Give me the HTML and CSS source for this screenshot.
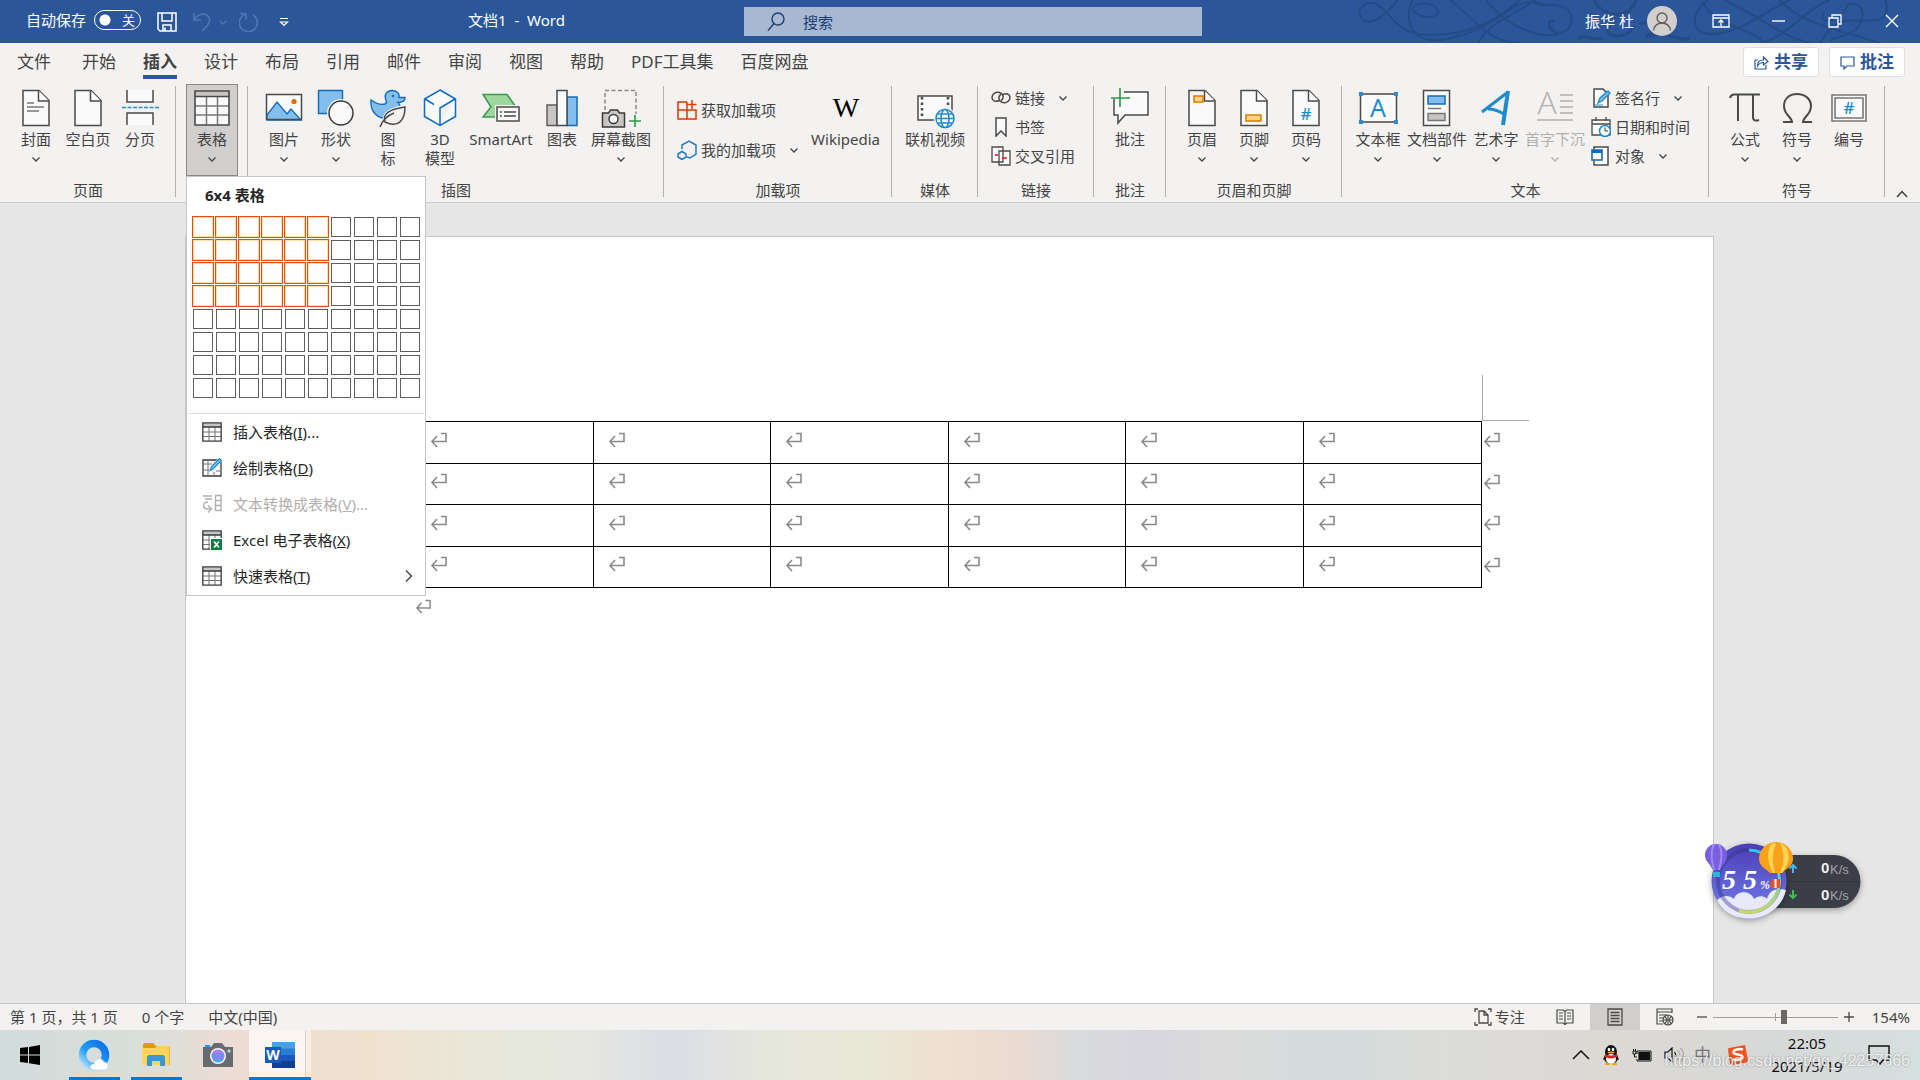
FILE: index.html
```html
<!DOCTYPE html>
<html lang="zh-CN">
<head>
    <meta charset="UTF-8">
    <meta name="viewport" content="width=device-width, initial-scale=1.0">
    <title>文档1 - Word</title>
    <link rel="stylesheet" href="styles.css">
</head>
<body>

<!-- Shared icons -->
<svg width="0" height="0" class="sprite" aria-hidden="true">
    <symbol id="chevron" viewBox="0 0 12 12"><path d="M2.500 4.500L6 8l3.500-3.500" fill="none" stroke="currentColor" stroke-width="1.300"/></symbol>
    <symbol id="enter" viewBox="0 0 18 16"><path d="M11 1.500h5v8H2M7 4L2 9.500 7 15" fill="none" stroke="#8a8a8a" stroke-width="1.600"/></symbol>
    <symbol id="table-sm" viewBox="0 0 20 20"><path d="M.8.8h18.4v18.4H.8z" fill="#fafafa"/><path d="M1 1h18v4H1z" fill="#c8c6c4"/><path d="M1 10h18M1 14.500h18M7 5v14M13 5v14" stroke="#797775"/><path d="M.8.8h18.4v18.4H.8zM1 5h18" fill="none" stroke="#3b3a39" stroke-width="1.300"/></symbol>
    <symbol id="sheet" viewBox="0 0 40 40"><path d="M7 2.500h16l10 10V37.500H7z" fill="#fafafa" stroke="#4b4a48" stroke-width="1.500"/><path d="M22.500 2.500v10.500H33" fill="#fff" stroke="#4b4a48" stroke-width="1.500"/></symbol>
</svg>

<header class="titlebar">
    <svg class="swirls" viewBox="0 0 580 43" aria-hidden="true">
        <g fill="none" stroke="#254b86" stroke-width="2">
            <path d="M58 0C40 22 28 25 22 19C14 10 26 0 36 4C50 10 54 30 78 34C120 38 150 26 180 0"/>
            <path d="M72 0C64 24 72 42 100 40C130 36 150 24 170 10C186 -2 200 2 210 6"/>
            <path d="M72 8C82 0 98 4 98 12C96 20 76 18 72 8M110 0C140 24 150 43 180 43"/>
            <path d="M138 43C150 22 174 14 196 0M146 0C170 30 200 38 218 34C236 30 236 10 220 6C206 2 200 10 192 0"/>
            <path d="M218 34C206 28 208 18 214 22M238 40C244 32 252 42 262 38M254 0C262 18 290 20 296 0M270 26C260 34 284 44 294 26M300 24C310 20 320 30 306 36C330 30 340 43 350 38" stroke-width="3"/>
            <path d="M368 0C350 14 350 32 370 34C400 34 420 14 450 0M384 0C420 16 440 36 470 43M362 2C380 30 410 26 424 43"/>
            <path d="M420 43C450 36 460 12 490 0M440 0C460 24 500 30 540 43M484 12C476 26 500 22 506 8C510 -2 530 6 520 24C516 34 500 36 490 40M545 0C550 10 544 22 534 20C510 24 500 10 480 43"/>
        </g>
    </svg>
    <div class="titlebar-left">
        <label class="autosave">自动保存
            <span class="switch"><input type="checkbox"><span>关</span></span>
        </label>
        <button class="plain" aria-label="保存"><svg width="20" height="20" viewBox="0 0 20 20" fill="none" stroke="#fff" stroke-width="1.500"><path d="M1 1h18v18H3l-2-2zM5 1v8h10V1M6 19v-6h8v6M8 15.500v3"/></svg></button>
        <div class="undo">
            <button class="plain" aria-label="撤消"><svg width="18" height="20" viewBox="0 0 18 20" fill="none" stroke="#4f76b3" stroke-width="1.600"><path d="M1 1v7h7M1 8C6 1 12 1 15 4c3 4 1 8-1 10l-5 5"/></svg></button>
            <svg width="12" height="12"><use href="#chevron"/></svg>
            <button class="plain" aria-label="重复"><svg width="20" height="20" viewBox="0 0 20 20" fill="none" stroke="#4f76b3" stroke-width="1.600"><path d="M1 1.500h6v6M7 2A9 9 0 1 0 14 3"/></svg></button>
        </div>
        <button class="plain" aria-label="自定义快速访问工具栏"><svg width="10" height="10" viewBox="0 0 10 10" fill="none" stroke="#fff" stroke-width="1.200"><path d="M1 1.500h8M1.500 5L5 8.500 8.500 5z"/></svg></button>
        <h1 class="doc-title">文档1&nbsp; -&nbsp; Word</h1>
    </div>
    <label class="search">
        <svg width="18" height="20" viewBox="0 0 18 20" fill="none" stroke="#1f3f75" stroke-width="1.400"><circle cx="11" cy="7" r="6"/><path d="M7 11.500L1 18.500"/></svg>
        <input type="search" placeholder="搜索" aria-label="搜索">
    </label>
    <div class="titlebar-right">
        <span>振华 杜</span>
        <svg class="avatar" width="30" height="30" viewBox="0 0 30 30"><circle cx="15" cy="15" r="15" fill="#d2d0ce"/><g fill="none" stroke="#605e5c" stroke-width="1.400"><circle cx="15" cy="12" r="5"/><path d="M6.500 24.500c1-10 16-10 17 0"/></g></svg>
        <button class="window-btn" aria-label="功能区显示选项"><svg width="18" height="14" viewBox="0 0 18 14" fill="none" stroke="#fff" stroke-width="1.300"><path d="M1 1h16v12H1zM1 4h16M9 12V6M6.500 8.500L9 6l2.500 2.500"/></svg></button>
        <button class="window-btn" aria-label="最小化"><svg width="14" height="14"><path d="M1 7h13" stroke="#fff" stroke-width="1.400"/></svg></button>
        <button class="window-btn" aria-label="向下还原"><svg width="14" height="14" viewBox="0 0 14 14" fill="none" stroke="#fff" stroke-width="1.300"><path d="M1 4h9v9H1zM4 4V1h9v9h-3"/></svg></button>
        <button class="window-btn" aria-label="关闭"><svg width="14" height="14"><path d="M1 1l12 12M13 1L1 13" stroke="#fff" stroke-width="1.400"/></svg></button>
    </div>
</header>

<nav class="tabs">
    <button class="tab tab-file">文件</button>
    <button class="tab">开始</button>
    <button class="tab active">插入</button>
    <button class="tab">设计</button>
    <button class="tab">布局</button>
    <button class="tab">引用</button>
    <button class="tab">邮件</button>
    <button class="tab">审阅</button>
    <button class="tab">视图</button>
    <button class="tab">帮助</button>
    <button class="tab">PDF工具集</button>
    <button class="tab">百度网盘</button>
    <div class="tab-actions">
        <button class="action"><svg width="15" height="15" viewBox="0 0 15 15" fill="none" stroke="#2b579a" stroke-width="1.200"><path d="M4 5H1v9h11v-4M3.500 11c0-4 2-6 6-6V2l4.500 4.500L9.500 10V7.500c-3 0-4.500 1-6 3.500z"/></svg>共享</button>
        <button class="action"><svg width="15" height="15" viewBox="0 0 15 15" fill="none" stroke="#2b579a" stroke-width="1.200"><path d="M1 2h13v9H7l-3 3v-3H1z"/></svg>批注</button>
    </div>
</nav>

<section class="ribbon">
    <div class="group">
        <div class="group-items">
            <button class="big">
                <svg class="icon"><use href="#sheet"/><path d="M11 15h7M11 19h17M11 23h12" stroke="#797775" stroke-width="1.500"/></svg>
                <span>封面</span><svg class="chev"><use href="#chevron"/></svg>
            </button>
            <button class="big"><svg class="icon"><use href="#sheet"/></svg><span>空白页</span></button>
            <button class="big">
                <svg class="icon" fill="#fafafa" stroke="#4b4a48" stroke-width="1.500"><path d="M7 2v12h26V2M7 37V25h26v12"/><path d="M2 19.500h37" stroke="#2a8dd4" stroke-dasharray="4 1.500"/></svg>
                <span>分页</span>
            </button>
        </div>
        <div class="group-label">页面</div>
    </div>

    <div class="group">
        <div class="group-items">
            <div class="dropdown">
                <button class="big pressed">
                    <svg class="icon"><path d="M3 3h34v34H3z" fill="#fafafa"/><path d="M3 3h34v6H3z" fill="#c8c6c4"/><path d="M3 18h34M3 27h34M14.500 9v28M25.500 9v28" stroke="#797775" stroke-width="1.500"/><path d="M3 3h34v34H3zM3 8.500h34" fill="none" stroke="#4b4a48" stroke-width="1.600"/></svg>
                    <span>表格</span><svg class="chev"><use href="#chevron"/></svg>
                </button>
                <div class="menu">
                    <div class="menu-title" id="gridTitle">6x4 表格</div>
                    <div class="size-grid" id="sizeGrid"></div>
                    <ul class="menu-list">
                        <li><button><svg width="20" height="20"><use href="#table-sm"/></svg><span>插入表格(<u>I</u>)...</span></button></li>
                        <li><button><svg width="20" height="20" viewBox="0 0 20 20"><path d="M1 2h18v16H1z" fill="#fafafa" stroke="#3b3a39" stroke-width="1.300"/><path d="M1 6h9M1 12h6M6 2v16M12 14v4M14 13h5" stroke="#797775"/><path d="M7 13l2-5 9-9 3 3-9 9z" fill="#fff"/><path d="M8 12.500l1.500-4 8-8 2 2-8 8z" fill="#83beec" stroke="#1e8bcd" stroke-width="1.200"/></svg><span>绘制表格(<u>D</u>)</span></button></li>
                        <li><button disabled><svg width="20" height="20" viewBox="0 0 20 20" fill="none" stroke="#b1afad" stroke-width="1.400"><path d="M1 2h9M3 5h7M13.500 1.500h5.500v15h-5.500zM13.500 6.500H19M13.500 11.500H19M6 8c-6 0-6 7 0 7h3M6 11.500l3.500 3.500L6 18.500"/></svg><span>文本转换成表格(<u>V</u>)...</span></button></li>
                        <li><button><svg width="20" height="20"><use href="#table-sm"/><path d="M8 8h12v12H8z" fill="#fff"/><path d="M9 9h11v11H9z" fill="#107c41"/><path d="M12 11.500l5 6M17 11.500l-5 6" stroke="#fff" stroke-width="1.600"/></svg><span>Excel 电子表格(<u>X</u>)</span></button></li>
                        <li><button><svg width="20" height="20"><use href="#table-sm"/></svg><span>快速表格(<u>T</u>)</span><svg class="submenu" width="8" height="12" fill="none" stroke="#3b3a39" stroke-width="1.300"><path d="M1 0.500l5.500 5.500L1 11.500"/></svg></button></li>
                    </ul>
                </div>
            </div>
        </div>
    </div>

    <div class="group">
        <div class="group-items">
            <button class="big">
                <svg class="icon"><path d="M2.500 6.500h35v25h-35z" fill="#fafafa"/><path d="M3 27l10-13 10 12 4-5 10 11H3z" fill="#83beec" stroke="#0f6cbd" stroke-width="1.300"/><circle cx="30" cy="13.500" r="2.600" fill="#e06c00"/><path d="M2.500 6.500h35v25h-35z" fill="none" stroke="#4b4a48" stroke-width="1.500"/></svg>
                <span>图片</span><svg class="chev"><use href="#chevron"/></svg>
            </button>
            <button class="big">
                <svg class="icon"><path d="M2.500 2.500h24v23h-24z" fill="#83beec" stroke="#0f6cbd" stroke-width="1.400"/><circle cx="25" cy="25" r="14" fill="#f3f2f1"/><circle cx="25" cy="25" r="12" fill="#fafafa" stroke="#3b3a39" stroke-width="1.500"/></svg>
                <span>形状</span><svg class="chev"><use href="#chevron"/></svg>
            </button>
            <button class="big">
                <svg class="icon"><path d="M3 12c6 4 9 5 14 4 2-1 2-2 1-4-3-7 3-10 7-9.500 5 .5 7 4 6 7h6c0 4-3 5-7 5 5 4 1 16-11 16-9 0-17-6-16-18.500z" fill="#83beec" stroke="#0f6cbd" stroke-width="1.400"/><circle cx="25" cy="8" r="1.200" fill="#0f6cbd"/><path d="M10 40c2-6 3-8 5-10 1-8 11-12 24-13 0 12-4 22-20 21z" fill="#f3f2f1"/><path d="M12 39c3-8 9-12 14-14M17 34c-3-9 6-13 20-15 0 12-6 22-20 15z" fill="none" stroke="#4b4a48" stroke-width="1.500"/></svg>
                <span>图<br>标</span>
            </button>
            <button class="big">
                <svg class="icon" fill="#fafafa" stroke="#0f6cbd" stroke-width="1.500"><path d="M20 2l15.500 9v17.500L20 37.500 4.500 28.500V11zM5 11l9 5.500M35 11L20 20v17"/></svg>
                <span>3D<br>模型</span>
            </button>
            <button class="big wide">
                <svg class="icon"><path d="M2 6.500h24L35 19l-9 10H2l8-10z" fill="#9fd89f" stroke="#3a9a4c" stroke-width="1.500"/><path d="M14 17h25v18H14z" fill="#f3f2f1"/><path d="M16 19h22v14H16z" fill="#fafafa" stroke="#4b4a48" stroke-width="1.500"/><path d="M19 24h2M23 24h12M19 28h2M23 28h12" stroke="#4b4a48" stroke-width="1.300"/></svg>
                <span>SmartArt</span>
            </button>
            <button class="big">
                <svg class="icon" stroke-width="1.500"><path d="M5 17h10v20.500H5z" fill="#c8c6c4" stroke="#605e5c"/><path d="M25 9h10v28.500H25z" fill="#83beec" stroke="#0f6cbd"/><path d="M15 2.500h10v35H15z" fill="#fafafa" stroke="#4b4a48"/></svg>
                <span>图表</span>
            </button>
            <button class="big mid">
                <svg class="icon" fill="none"><path d="M4 22V2.500h31V26" stroke="#8a8886" stroke-width="1.500" stroke-dasharray="4 2.500"/><path d="M1.500 25h6l2-3h7l2 3h5v14h-22z" fill="#c8c6c4" stroke="#3b3a39" stroke-width="1.500"/><circle cx="12.500" cy="31" r="4.500" fill="#fafafa" stroke="#3b3a39" stroke-width="1.500"/><path d="M28 33h12M34 27v12" stroke="#2b9a46" stroke-width="1.600"/></svg>
                <span>屏幕截图</span><svg class="chev"><use href="#chevron"/></svg>
            </button>
        </div>
        <div class="group-label">插图</div>
    </div>

    <div class="group">
        <div class="group-items">
            <div class="stack loose">
                <button class="small"><svg width="20" height="20" viewBox="0 0 20 20" fill="none" stroke="#d83b01" stroke-width="1.500"><path d="M10 2H1v17h18v-9H1M10 2v17M15 0v9M10.500 4.500h9"/></svg>获取加载项</button>
                <button class="small"><svg width="20" height="20" viewBox="0 0 20 20" fill="none" stroke="#2179c4" stroke-width="1.500"><path d="M5 9V5l7-4 7 4v9l-6 4-3-1M1 14l4-2.500L9 14v3l-4 2.500L1 17z"/></svg>我的加载项<svg class="chev"><use href="#chevron"/></svg></button>
            </div>
            <button class="big wiki"><svg class="icon"><text x="20" y="29" text-anchor="middle" class="wiki-w">W</text></svg><span>Wikipedia</span></button>
        </div>
        <div class="group-label">加载项</div>
    </div>

    <div class="group">
        <div class="group-items">
            <button class="big mid">
                <svg class="icon"><path d="M3 8h34v24H3z" fill="#fafafa" stroke="#4b4a48" stroke-width="1.500"/><path d="M7 9v22M33 9v22" stroke="#4b4a48" stroke-width="2.500" stroke-dasharray="2.500 3"/><circle cx="30" cy="30.500" r="11" fill="#f3f2f1"/><g fill="#fafafa" stroke="#1e8bcd" stroke-width="1.500"><circle cx="30" cy="30.500" r="9"/><ellipse cx="30" cy="30.500" rx="4" ry="9"/><path d="M21 30.500h18M22.500 26h15M22.500 35h15"/></g></svg>
                <span>联机视频</span>
            </button>
        </div>
        <div class="group-label">媒体</div>
    </div>

    <div class="group">
        <div class="group-items">
            <div class="stack">
                <button class="small"><svg width="20" height="20" viewBox="0 0 20 20" fill="none" stroke="#4b4a48" stroke-width="1.500"><path d="M8 12.500C3 15 0 11 1.500 7.500S8 3 11 6c2 2.500 1 5.500-1 6.500M12 6.500c5-2.500 8 1.500 6.500 5S12 16 9 13c-2-2.500-1-5.500 1-6.500"/></svg>链接<svg class="chev"><use href="#chevron"/></svg></button>
                <button class="small"><svg width="20" height="20" viewBox="0 0 20 20" fill="#fafafa" stroke="#4b4a48" stroke-width="1.500"><path d="M5 1h10v18l-5-5-5 5z"/></svg>书签</button>
                <button class="small"><svg width="20" height="20" viewBox="0 0 20 20" fill="#fafafa" stroke="#4b4a48" stroke-width="1.300"><path d="M1 1h11v15H1zM8 5h11v14H8z"/><path d="M4 9h3M11 12h5" stroke="#e81123" stroke-width="1.500"/></svg>交叉引用</button>
            </div>
        </div>
        <div class="group-label">链接</div>
    </div>

    <div class="group">
        <div class="group-items">
            <button class="big">
                <svg class="icon" fill="#fafafa"><path d="M4 4h34v23H15l-7 8v-8H4z" stroke="#4b4a48" stroke-width="1.500"/><path d="M0 0h14v6h-3v8H7v-3H0z" fill="#f3f2f1"/><path d="M1 10h19M10 0v19" stroke="#2b9a46" stroke-width="1.600"/></svg>
                <span>批注</span>
            </button>
        </div>
        <div class="group-label">批注</div>
    </div>

    <div class="group">
        <div class="group-items">
            <button class="big"><svg class="icon"><use href="#sheet"/><path d="M12 8h9v6h-9z" fill="#fcd38a" stroke="#e07b00" stroke-width="1.500"/></svg><span>页眉</span><svg class="chev"><use href="#chevron"/></svg></button>
            <button class="big"><svg class="icon"><use href="#sheet"/><path d="M12 27h15v6H12z" fill="#fcd38a" stroke="#e07b00" stroke-width="1.500"/></svg><span>页脚</span><svg class="chev"><use href="#chevron"/></svg></button>
            <button class="big"><svg class="icon"><use href="#sheet"/><text x="20" y="32" text-anchor="middle" class="glyph hash">#</text></svg><span>页码</span><svg class="chev"><use href="#chevron"/></svg></button>
        </div>
        <div class="group-label">页眉和页脚</div>
    </div>

    <div class="group">
        <div class="group-items">
            <button class="big">
                <svg class="icon"><path d="M2.500 6h36v28h-36z" fill="#fafafa" stroke="#4b4a48" stroke-width="1.500"/><text x="20" y="29" text-anchor="middle" class="glyph letter">A</text><path d="M1 4h4v4H1zM36 4h4v4h-4zM1 32h4v4H1zM36 32h4v4h-4z" fill="#2a8dd4"/></svg>
                <span>文本框</span><svg class="chev"><use href="#chevron"/></svg>
            </button>
            <button class="big mid">
                <svg class="icon" stroke-width="1.500"><path d="M6.500 2.500h26v35h-26z" fill="#fafafa" stroke="#4b4a48"/><path d="M11 8h17v8H11z" fill="#83beec" stroke="#0f6cbd"/><path d="M11 20.500h13" stroke="#797775"/><path d="M11 25.500h17v7H11z" fill="#c8c6c4" stroke="#797775"/></svg>
                <span>文档部件</span><svg class="chev"><use href="#chevron"/></svg>
            </button>
            <button class="big">
                <svg class="icon" fill="none" stroke="#1e8bcd"><path d="M6 24L32 4M12 21c6 0 11 2 16 5" stroke-width="3"/><path d="M32 3L27 37" stroke-width="4"/></svg>
                <span>艺术字</span><svg class="chev"><use href="#chevron"/></svg>
            </button>
            <button class="big mid" disabled>
                <svg class="icon"><text x="12" y="26" text-anchor="middle" class="drop-cap">A</text><path d="M25 7h13M25 13h13M25 19h13M25 25h13M2 32h36" stroke="#b1afad" stroke-width="1.500"/></svg>
                <span>首字下沉</span><svg class="chev"><use href="#chevron"/></svg>
            </button>
            <div class="stack">
                <button class="small"><svg width="20" height="20" viewBox="0 0 20 20"><path d="M3 1h9l5 5v13H3z" fill="#fafafa" stroke="#4b4a48" stroke-width="1.500"/><path d="M3 17h9" stroke="#1e8bcd"/><path d="M7 15l2-5 8-7 2 2-8 8z" fill="#83beec" stroke="#1e8bcd" stroke-width="1.300"/></svg>签名行<svg class="chev"><use href="#chevron"/></svg></button>
                <button class="small"><svg width="20" height="20" viewBox="0 0 20 20" fill="#fafafa"><path d="M1 3h18v15H1zM1 7h18M5 0v4M15 0v4" stroke="#4b4a48" stroke-width="1.300"/><circle cx="14" cy="14" r="5.500" stroke="#1e8bcd" stroke-width="1.500"/><path d="M14 10.500V14h3" fill="none" stroke="#3b3a39"/></svg>日期和时间</button>
                <button class="small"><svg width="20" height="20" viewBox="0 0 20 20" fill="#fafafa"><path d="M3 1h14v18H3z" stroke="#4b4a48" stroke-width="1.500"/><path d="M1 4h10v10H1z" stroke="#0f6cbd" stroke-width="1.600"/><path d="M1 5.500h10" stroke="#0f6cbd" stroke-width="3"/></svg>对象<svg class="chev"><use href="#chevron"/></svg></button>
            </div>
        </div>
        <div class="group-label">文本</div>
    </div>

    <div class="group">
        <div class="group-items">
            <button class="big"><svg class="icon" fill="none" stroke="#4b4a48" stroke-width="2"><path d="M5 10c1-3 2-3.500 4-3.500h26M13 7v26M28 7v22c0 4 3 4 6 3"/></svg><span>公式</span><svg class="chev"><use href="#chevron"/></svg></button>
            <button class="big"><svg class="icon" fill="none" stroke="#4b4a48" stroke-width="2"><path d="M6 34h9c0-5-8-7-8-16C7 11 12 6 20 6s14 5 14 12c0 9-8 11-8 16h9"/></svg><span>符号</span><svg class="chev"><use href="#chevron"/></svg></button>
            <button class="big"><svg class="icon" fill="#fafafa" stroke="#797775" stroke-width="1.600"><path d="M3 7h34v26H3zM6 10h28v20H6z"/><text x="20" y="26" text-anchor="middle" class="glyph hash">#</text></svg><span>编号</span></button>
        </div>
        <div class="group-label">符号</div>
    </div>
    <button class="plain collapse" aria-label="折叠功能区"><svg width="12" height="8" fill="none" stroke="#3b3a39" stroke-width="1.500"><path d="M1 7l5-5.500L11 7"/></svg></button>
</section>

<main class="workspace">
    <div class="page">
        <div class="top-margin"><span class="crop-mark"></span></div>
        <table class="doc-table" id="docTable"></table>
        <p class="paragraph"><svg width="17" height="15"><use href="#enter"/></svg></p>
    </div>
</main>

<!-- Floating speed monitor -->
<aside class="monitor">
    <svg width="170" height="100" viewBox="0 0 170 100">
        <defs>
            <linearGradient id="ball" x1="0" y1="0" x2="0" y2="1"><stop offset="0" stop-color="#4a3db4"/><stop offset="1" stop-color="#7480ee"/></linearGradient>
            <linearGradient id="ring" x1="0" y1="0" x2="0" y2="1"><stop offset="0" stop-color="#35c3e8"/><stop offset="1" stop-color="#c6dd5a"/></linearGradient>
            <filter id="shade" x="-20%" y="-20%" width="140%" height="150%"><feDropShadow dx="0" dy="2" stdDeviation="3" flood-opacity=".35"/></filter>
        </defs>
        <path d="M54 15h80a26 26 0 0 1 0 53H54z" fill="#3a3e47" filter="url(#shade)"/>
        <path d="M70 41.500h89" stroke="#30343b"/>
        <circle cx="49" cy="41" r="37.500" fill="url(#ball)" filter="url(#shade)"/>
        <path d="M17 60c6-5 12-5 17-1 2-9 17-9 20 0 6-4 10-3 13 0 2-9 10-12 19-9C82 68 66 78.500 49 78.500S22 70 17 60z" fill="#e8eafc"/>
        <circle cx="49" cy="41" r="31" fill="none" stroke="#352f85" stroke-opacity=".4" stroke-width="4"/>
        <path d="M49 10a31 31 0 1 1-10 60.500" fill="none" stroke="url(#ring)" stroke-width="3"/>
        <g fill="#7a5fe0"><circle cx="16" cy="15" r="11"/><path d="M6 19l7 11h7l7-11z"/></g>
        <path d="M14 4c-4 8-3 16 0 26M19 4c4 8 3 16 0 26" fill="none" stroke="#a08af0" stroke-width="2"/>
        <path d="M13 32h7v5h-7z" fill="#2fb5dd"/>
        <path d="M59 19a17 17 0 0 1 34 0c0 7-7 10-11 14H70c-4-4-11-7-11-14z" fill="#f9a11b"/>
        <path d="M71 4c-5 10-3 20 2 29h2c-3-11-3-20 1-30zM80 3c5 10 4 20 0 30h2c6-8 10-18 3-27z" fill="#ffd454"/>
        <path d="M71 39h9v9h-9z" fill="#e65320"/><path d="M75.500 39v9" stroke="#fff" stroke-width="2"/>
        <path d="M93 33v-7M89.500 28.500L93 25l3.500 3.500" fill="none" stroke="#43b6ee" stroke-width="2"/>
        <path d="M93 50v7M89.500 54.500L93 58l3.500-3.500" fill="none" stroke="#38c04b" stroke-width="2"/>
        <text x="22" y="49" class="percent">5 5</text>
        <text x="60" y="49" class="percent-sign">%</text>
        <text x="121" y="33" class="speed">0</text><text x="130" y="34" class="unit">K/s</text>
        <text x="121" y="60" class="speed">0</text><text x="130" y="60" class="unit">K/s</text>
    </svg>
</aside>

<footer class="statusbar">
    <span>第 1 页，共 1 页</span>
    <span>0 个字</span>
    <span>中文(中国)</span>
    <div class="status-right">
        <button class="plain focus-btn"><svg width="18" height="18" viewBox="0 0 18 18" fill="none" stroke="#4b4a48" stroke-width="1.300"><path d="M4 1H1v3M14 1h3v3M4 17H1v-3M14 17h3v-3M5 3h5l4 4v8H5zM10 3v4h4"/></svg>专注</button>
        <button class="view" aria-label="阅读视图"><svg width="18" height="16" viewBox="0 0 18 16" fill="none" stroke="#4b4a48" stroke-width="1.200"><path d="M9 2.500L7 1H1v13h6l2 1.500 2-1.500h6V1h-6zM9 2.500V15M3 4h4M3 7h4M3 10h4M11 4h4M11 7h4M11 10h4"/></svg></button>
        <button class="view on" aria-label="页面视图"><svg width="16" height="18" viewBox="0 0 16 18" fill="none" stroke="#4b4a48" stroke-width="1.300"><path d="M1 1h14v16H1zM3.500 4.500h9M3.500 7.500h9M3.500 10.500h9M3.500 13.500h9"/></svg></button>
        <button class="view" aria-label="Web 版式视图"><svg width="18" height="18" viewBox="0 0 18 18" fill="none" stroke="#4b4a48" stroke-width="1.200"><path d="M16 5V1H1v15h6M1 4h15M3 7h8M3 10h5M3 13h4"/><circle cx="12" cy="12" r="5"/><path d="M7 12h10M12 7v10M9 8.500c2 2 2 5 0 7M15 8.500c-2 2-2 5 0 7"/></svg></button>
        <div class="zoom">
            <button class="plain" aria-label="缩小"><svg width="12" height="12"><path d="M1 6h10" stroke="#4b4a48" stroke-width="1.300"/></svg></button>
            <input type="range" min="0" max="100" value="57" aria-label="缩放">
            <button class="plain" aria-label="放大"><svg width="12" height="12"><path d="M1 6h10M6 1v10" stroke="#4b4a48" stroke-width="1.300"/></svg></button>
        </div>
        <span class="zoom-value">154%</span>
    </div>
</footer>

<div class="taskbar">
    <button class="task start" aria-label="开始"><svg width="20" height="20" viewBox="0 0 20 20"><path d="M0 3l8-1v7.500H0zM9 1.900L20 0v9.500H9zM0 10.500h8V18l-8-1zM9 10.500h11V20L9 18.300z"/></svg></button>
    <button class="task open" aria-label="QQ浏览器">
        <svg width="32" height="32" viewBox="0 0 32 32"><defs><linearGradient id="qb" x1="0" y1="1" x2="1" y2="0"><stop offset="0" stop-color="#bfe6ff"/><stop offset=".4" stop-color="#1fa0f8"/><stop offset="1" stop-color="#0d6fe8"/></linearGradient></defs><circle cx="16" cy="16" r="11.500" fill="none" stroke="url(#qb)" stroke-width="7.500"/><path d="M16 31c-5 0-5-6 0-6 1-6 8-7 10-2 5 0 6 8 0 8z" fill="#fff" stroke="#b9cfe4" stroke-width=".6"/></svg>
    </button>
    <button class="task open" aria-label="文件资源管理器">
        <svg width="28" height="26" viewBox="0 0 28 26"><path d="M1 3q0-2 2-2h8l3 3h12q2 0 2 2v17H1z" fill="#dd9a0a"/><path d="M0 6h13l2-2h11q1.500 0 1.500 2v17H0z" fill="#ffd35c"/><path d="M5 24v-8q0-3 3-3h12q3 0 3 3v8h-5v-5h-8v5z" fill="#3b96d8"/></svg>
    </button>
    <button class="task" aria-label="相机">
        <svg width="30" height="26" viewBox="0 0 30 26"><path d="M2 3h5v3H2z" fill="#1aa0e8"/><path d="M0 5h8l3-4h8l3 4h8v20H0z" fill="#666b70"/><circle cx="15" cy="14" r="8" fill="#f4f4f4"/><circle cx="15" cy="14" r="6.500" fill="#7a8af0"/><path d="M9.500 11a6.500 6.500 0 0 1 11 0z" fill="#b77be8"/><path d="M10 18a6.500 6.500 0 0 0 10 0z" fill="#3bb3f0"/><path d="M26 7v4M24 9h4" stroke="#dde3e8"/></svg>
    </button>
    <button class="task open current" aria-label="Word">
        <svg width="30" height="26" viewBox="0 0 30 26"><path d="M7 0h23v7H7z" fill="#41a5ee"/><path d="M7 6.500h23v7H7z" fill="#2b7cd3"/><path d="M7 13h23v7H7z" fill="#185abd"/><path d="M7 19h23v7H7z" fill="#103f91"/><path d="M0 5h16v16H0z" fill="#185abd"/><text x="8" y="18" text-anchor="middle" class="word-w">W</text></svg>
    </button>
    <div class="tray">
        <svg width="18" height="10" fill="none" stroke="#111" stroke-width="1.500"><path d="M1 9l8-8 8 8"/></svg>
        <svg width="18" height="20" viewBox="0 0 18 20"><path d="M4 10L1 14l1 1 3-2zM14 10l3 4-1 1-3-2z" fill="#111"/><ellipse cx="9" cy="7" rx="6" ry="7" fill="#111"/><ellipse cx="9" cy="13" rx="7" ry="6" fill="#111"/><ellipse cx="9" cy="14" rx="5" ry="5" fill="#fff"/><path d="M3 9q6 3 12 0l.5 2.500Q9 15 3 12z" fill="#e02020"/><ellipse cx="7" cy="4.500" rx="1.300" ry="1.800" fill="#fff"/><ellipse cx="11" cy="4.500" rx="1.300" ry="1.800" fill="#fff"/><ellipse cx="9" cy="7.500" rx="3.500" ry="1" fill="#f7a600"/><path d="M3 18h5v2H3zM10 18h5v2h-5z" fill="#f7a600"/></svg>
        <svg width="20" height="14" viewBox="0 0 20 14"><path d="M6 3.500h12.500v9H6z" fill="#111" stroke="#fff" stroke-width=".6"/><path d="M5 6V3h14v10H5v-2M1 3v3h3V3zM1.500 3V1M3.500 3V1M2.500 6v3H5" fill="none" stroke="#111"/></svg>
        <svg width="20" height="16" viewBox="0 0 20 16" fill="none" stroke="#111" stroke-width="1.200"><path d="M1 5h3l4-4v14l-4-4H1zM10.500 5c1.500 2 1.500 4 0 6"/><path d="M13.500 3c3 3 3 7 0 10M16.500 1c4 4 4 10 0 14" stroke="#aaa"/></svg>
        <span class="ime">中</span>
        <svg width="20" height="20" viewBox="0 0 20 20"><path d="M1 3l16-3 3 15q0 2-2 2.500L4 20q-2 0-2-2L0 5q0-2 1-2z" fill="#f0541e"/><path d="M15 4.500c-4-1-10 0-9.500 3 .5 2.500 9 1.500 9 4.500 0 2.500-5 3.500-9.500 2.500" fill="none" stroke="#fff" stroke-width="2.500"/></svg>
        <div class="clock"><time>22:05</time><time>2021/5/19</time></div>
        <svg class="notice" width="22" height="20" fill="none" stroke="#111" stroke-width="1.400"><path d="M1 1h20v14h-6l-3 4-4-4H1z"/></svg>
    </div>
    <span class="watermark">https://blog.csdn.net/qq_42257666</span>
</div>

<script>
const sizeGrid = document.getElementById('sizeGrid');
const gridTitle = document.getElementById('gridTitle');
const docTable = document.getElementById('docTable');
const mark = '<svg width="18" height="16"><use href="#enter"/></svg>';

// 10 x 8 size picker
for (let r = 1; r <= 8; r++) {
    for (let c = 1; c <= 10; c++) {
        const cell = document.createElement('button');
        cell.className = 'cell';
        cell.setAttribute('aria-label', `${c}x${r}`);
        cell.onmouseenter = () => preview(c, r);
        sizeGrid.appendChild(cell);
    }
}

// Highlight the picked size and draw the table in the document
function preview(cols, rows) {
    [...sizeGrid.children].forEach((cell, i) => {
        cell.classList.toggle('picked', i % 10 < cols && Math.floor(i / 10) < rows);
    });
    gridTitle.textContent = `${cols}x${rows} 表格`;
    const row = `<tr>${`<td>${mark}</td>`.repeat(cols)}<td class="row-end">${mark}</td></tr>`;
    docTable.innerHTML = row.repeat(rows);
}

preview(6, 4);
</script>

</body>
</html>
```

FILE: styles.css
```css
/* Global styling */
* {
    box-sizing: border-box;
}

body {
    margin: 0;
    height: 100vh;
    display: flex;
    flex-direction: column;
    overflow: hidden;
    position: relative;
    font-family: "Noto Sans", "Noto Sans CJK SC", sans-serif;
    font-size: 15px;
    line-height: 20px;
    color: #444444;
    background-color: #e6e6e6;
}

button, input {
    font: inherit;
    color: inherit;
}

button {
    padding: 0;
    border: none;
    background: none;
    white-space: nowrap;
}

svg {
    flex: none;
    display: block;
}

.sprite {
    position: absolute;
}

.plain {
    display: flex;
    align-items: center;
}

/* Title bar */
.titlebar {
    position: relative;
    display: flex;
    height: 43px;
    padding-left: 24px;
    color: #ffffff;
    background-color: #2b579a;
}

.titlebar > * {
    position: relative;
}

.titlebar .swirls {
    position: absolute;
    top: 0;
    right: 0;
    width: 580px;
    height: 43px;
}

.titlebar-left, .titlebar-right {
    flex: 1;
    display: flex;
    align-items: center;
}

.titlebar-left {
    gap: 16px;
    padding-left: 2px;
}

.titlebar-right {
    justify-content: flex-end;
    padding-bottom: 2px;
}

.autosave {
    display: flex;
    align-items: center;
    gap: 8px;
    padding-bottom: 4px;
}

.switch {
    position: relative;
    width: 47px;
    height: 20px;
}

.switch input {
    appearance: none;
    width: 47px;
    height: 20px;
    margin: 0;
    border: 1px solid #ffffff;
    border-radius: 10px;
    background: radial-gradient(circle at 10px 9px, #ffffff 5px, transparent 6px);
}

.switch span {
    position: absolute;
    right: 6px;
    top: 0;
    font-size: 13px;
}

.undo {
    display: flex;
    align-items: center;
    gap: 6px;
    margin-right: 4px;
    color: #4f76b3;
}

.undo .plain:last-child {
    margin-left: 4px;
}

.doc-title {
    flex: 1;
    margin: 0;
    padding: 0 16px 4px 0;
    font-size: 15px;
    font-weight: 400;
    text-align: center;
}

.search {
    flex: 0 1 458px;
    display: flex;
    align-items: center;
    gap: 18px;
    margin: 7px 0;
    padding-left: 23px;
    background-color: #a6b8d2;
}

.search input {
    flex: 1;
    min-width: 0;
    padding: 0;
    border: none;
    outline: none;
    background: none;
}

.search input::placeholder {
    color: #1f3f75;
}

.avatar {
    margin: 0 15px 0 13px;
}

.window-btn {
    width: 57px;
    height: 43px;
    display: flex;
    align-items: center;
    justify-content: center;
}

/* Tabs */
.tabs {
    display: flex;
    gap: 27px;
    height: 41px;
    padding: 7px 15px 0 17px;
    font-size: 17px;
    line-height: 24px;
    background-color: #f3f2f1;
}

.tab {
    height: 29px;
    padding-bottom: 1px;
    border-bottom: 4px solid transparent;
}

.tab-file {
    margin-right: 4px;
}

.tab.active {
    font-weight: 700;
    border-bottom-color: #2b579a;
}

.tab-actions {
    display: flex;
    gap: 10px;
    margin: -3px 0 0 auto;
}

.action {
    display: flex;
    align-items: center;
    justify-content: center;
    gap: 5px;
    width: 76px;
    height: 30px;
    font-weight: 700;
    color: #2b579a;
    background-color: #ffffff;
    border: 1px solid #e1dfdd;
    border-radius: 3px;
}

/* Ribbon */
.ribbon {
    display: flex;
    height: 119px;
    background-color: #f3f2f1;
    border-bottom: 1px solid #d2d0ce;
}

.group {
    position: relative;
    padding: 0 10px;
}

.group::after {
    content: "";
    position: absolute;
    top: 2px;
    right: 0;
    bottom: 5px;
    border-right: 1px solid #b3b0ad;
}

.group-items {
    display: flex;
    height: 92px;
}

.group-label {
    margin-top: 4px;
    text-align: center;
}

.big {
    display: flex;
    flex-direction: column;
    align-items: center;
    width: 52px;
    height: 92px;
    padding-top: 4px;
    line-height: 19px;
}

.mid {
    width: 66px;
}

.wide {
    width: 70px;
}

.wiki {
    width: 73px;
}

.icon {
    width: 40px;
    height: 40px;
    margin-bottom: 2px;
    overflow: visible;
}

.chev {
    width: 12px;
    height: 12px;
}

.big .chev {
    margin-top: 4px;
}

.big:disabled {
    color: #b1afad;
}

.pressed {
    background-color: #d0cfce;
    box-shadow: inset 0 0 0 1px #8a8886;
}

.stack {
    display: flex;
    flex-direction: column;
}

.small {
    display: flex;
    align-items: center;
    gap: 4px;
    height: 29px;
    padding: 0 9px 2px 3px;
}

.small .chev {
    margin-left: 8px;
}

.loose {
    padding-top: 7px;
}

.loose .small {
    height: 40px;
}

.collapse {
    align-self: flex-end;
    margin: 0 12px 4px auto;
}

.glyph {
    fill: #1e8bcd;
    stroke: none;
}

.letter {
    font-size: 25px;
}

.hash {
    font-size: 17px;
    font-weight: 500;
}

.drop-cap {
    font-family: "Open Sans", sans-serif;
    font-size: 32px;
    font-weight: 300;
    fill: #b1afad;
}

.wiki-w {
    font-family: "Liberation Serif", serif;
    font-size: 28px;
    fill: #000000;
}

/* Table menu */
.dropdown {
    position: relative;
}

.menu {
    position: absolute;
    z-index: 5;
    top: 92px;
    left: 0;
    width: 240px;
    color: #262626;
    background-color: #ffffff;
    border: 1px solid #c6c6c6;
}

.menu-title {
    padding: 8px 18px;
    font-weight: 700;
}

.size-grid {
    display: grid;
    grid-template-columns: repeat(10, 20px);
    gap: 3px;
    padding: 4px 6px 15px;
}

.cell {
    height: 20px;
    border: 1px solid #605e5c;
}

.cell.picked {
    border-color: #ffe0a0;
    outline: 1px solid #eb4b12;
}

.menu-list {
    list-style: none;
    margin: 0 1px;
    padding: 0 0 1px;
    border-top: 1px solid #e1dfdd;
}

.menu-list button {
    display: flex;
    align-items: center;
    gap: 11px;
    width: 100%;
    height: 36px;
    padding: 0 11px 0 14px;
}

.menu-list button:disabled {
    color: #b1afad;
}

.menu-list .submenu {
    margin-left: auto;
}

/* Document */
.workspace {
    flex: 1;
    display: flex;
    min-height: 0;
    padding: 33px 206px 0 185px;
    overflow: hidden;
}

.page {
    flex: 1;
    padding: 0 232px 0 229px;
    background-color: #ffffff;
    border: 1px solid #c6c6c6;
    border-bottom: none;
}

.top-margin {
    display: flex;
    justify-content: flex-end;
    align-items: flex-end;
    height: 184px;
}

.crop-mark {
    width: 47px;
    height: 46px;
    margin-right: -48px;
    border-left: 1px solid #ababab;
    border-bottom: 1px solid #ababab;
}

.doc-table {
    width: calc(100% + 20px);
    height: 167px;
    table-layout: fixed;
    border-collapse: collapse;
}

.doc-table td {
    padding: 0 0 5px 14px;
    border: 1px solid #000000;
}

.doc-table .row-end {
    width: 20px;
    padding: 0 0 4px 1px;
    border-width: 0 0 0 1px;
}

.paragraph {
    margin: 11px 0 0;
}

/* Speed monitor */
.monitor {
    position: absolute;
    right: 50px;
    bottom: 140px;
}

.percent {
    font: italic 700 28px "Liberation Serif", serif;
    fill: #ffffff;
}

.percent-sign {
    font: italic 700 12px "Liberation Serif", serif;
    fill: #ffffff;
}

.speed {
    font: 700 15px "Liberation Sans", sans-serif;
    fill: #f0f0f0;
}

.unit {
    font: 13px "Liberation Sans", sans-serif;
    fill: #a0a4ab;
}

/* Status bar */
.statusbar {
    display: flex;
    align-items: center;
    gap: 24px;
    height: 27px;
    padding-left: 10px;
    background-color: #f3f2f1;
    border-top: 1px solid #c6c6c6;
}

.status-right {
    display: flex;
    align-items: center;
    margin-left: auto;
    padding-right: 10px;
}

.focus-btn {
    gap: 3px;
    margin-right: 15px;
}

.view {
    display: flex;
    align-items: center;
    justify-content: center;
    width: 50px;
    height: 26px;
}

.view.on {
    background-color: #d0cfce;
}

.zoom {
    display: flex;
    align-items: center;
    gap: 5px;
    margin: 0 17px 0 6px;
}

.zoom input {
    appearance: none;
    width: 125px;
    height: 14px;
    margin: 0;
    background: linear-gradient(#a19f9d, #a19f9d) center / 100% 1px no-repeat,
                linear-gradient(#a19f9d, #a19f9d) center / 1px 8px no-repeat;
}

.zoom input::-webkit-slider-thumb {
    appearance: none;
    width: 6px;
    height: 14px;
    background-color: #6b6967;
}

/* Taskbar */
.taskbar {
    position: relative;
    display: flex;
    height: 50px;
    color: #111111;
    background: linear-gradient(90deg, #d2dcdb 0%, #d8dfda 7%, #ecdcd4 12%, #f1e1cf 19%, #e8e8da 25%, #e6e8e0 30%, #dcdde6 35%, #e6e7dc 40%, #e9e8d8 45%, #f0e0d0 49%, #ebdad2 53%, #d9dbdc 56%, #d9d6df 60%, #dbdcda 64%, #d3dbdd 69%, #dcdcd8 75%, #dcd9d5 84%, #d7d8d8 92%, #d6e0df 100%);
}

.task {
    display: flex;
    align-items: center;
    justify-content: center;
    width: 62px;
}

.task.start {
    width: 60px;
    margin-right: 3px;
}

.task.open {
    background: linear-gradient(#0078d7, #0078d7) center bottom / 51px 3px no-repeat;
}

.task.current {
    background: linear-gradient(#0078d7, #0078d7) center bottom / 100% 3px no-repeat,
                linear-gradient(90deg, #faf5f0 56px, #d9cfc4 56px, #d9cfc4 57px, #f6eee5 57px);
}

.tray {
    display: flex;
    align-items: center;
    gap: 12px;
    margin-left: auto;
    padding-right: 30px;
}

.ime {
    width: 17px;
    margin: 0 5px 0 -2px;
    font-size: 17px;
    color: #777777;
}

.clock {
    display: flex;
    flex-direction: column;
    align-items: center;
    width: 78px;
    margin-left: 8px;
    line-height: 23px;
}

.notice {
    margin-left: 10px;
}

.word-w {
    font-size: 14px;
    font-weight: 700;
    fill: #ffffff;
}

.watermark {
    position: absolute;
    right: 10px;
    bottom: 9px;
    font: 16px/20px "Liberation Sans", sans-serif;
    color: rgba(255, 255, 255, 0.85);
    text-shadow: 0 0 2px rgba(0, 0, 0, 0.4);
}
```
